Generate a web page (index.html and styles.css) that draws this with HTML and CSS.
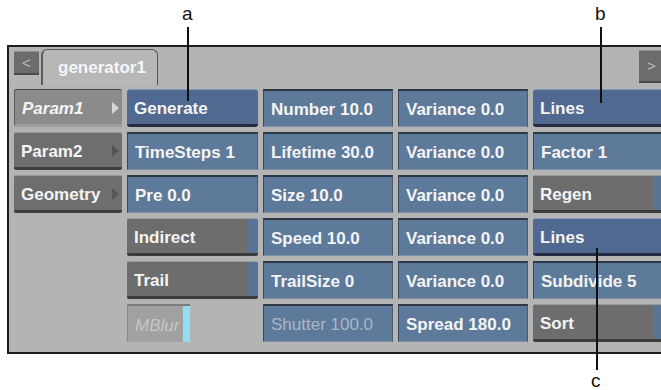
FILE: index.html
```html
<!DOCTYPE html>
<html lang="en">
<head>
  <meta charset="UTF-8">
  <title>generator1 - Parameters</title>
  <link rel="stylesheet" href="styles.css">
</head>
<body>

  <div class="figure">

    <div class="panel">
      <div class="tabbar">
        <div class="nav">&lt;</div>
        <div class="tab">generator1</div>
        <div class="nav nav-next">&gt;</div>
      </div>

      <div class="grid">
        <!-- row 1 -->
        <div class="cell menu active">Param1</div>
        <div class="cell sel">Generate</div>
        <div class="cell field">Number 10.0</div>
        <div class="cell field">Variance 0.0</div>
        <div class="cell sel">Lines</div>

        <!-- row 2 -->
        <div class="cell menu">Param2</div>
        <div class="cell field">TimeSteps 1</div>
        <div class="cell field">Lifetime 30.0</div>
        <div class="cell field">Variance 0.0</div>
        <div class="cell field">Factor 1</div>

        <!-- row 3 -->
        <div class="cell menu">Geometry</div>
        <div class="cell field">Pre 0.0</div>
        <div class="cell field">Size 10.0</div>
        <div class="cell field">Variance 0.0</div>
        <div class="cell btn toggle">Regen</div>

        <!-- row 4 -->
        <div class="empty"></div>
        <div class="cell btn toggle">Indirect</div>
        <div class="cell field">Speed 10.0</div>
        <div class="cell field">Variance 0.0</div>
        <div class="cell sel">Lines</div>

        <!-- row 5 -->
        <div class="empty"></div>
        <div class="cell btn toggle">Trail</div>
        <div class="cell field">TrailSize 0</div>
        <div class="cell field">Variance 0.0</div>
        <div class="cell field">Subdivide 5</div>

        <!-- row 6 -->
        <div class="empty"></div>
        <div class="cell mblur">MBlur</div>
        <div class="cell field off">Shutter 100.0</div>
        <div class="cell field">Spread 180.0</div>
        <div class="cell btn toggle">Sort</div>
      </div>
    </div>

    <!-- callouts -->
    <div class="callout callout-a"><span>a</span></div>
    <div class="callout callout-b"><span>b</span></div>
    <div class="callout callout-c"><span>c</span></div>

  </div>

</body>
</html>
```

FILE: styles.css
```css
body {
  margin: 0;
  background: #fff;
  font-family: 'Liberation Sans', Arial, sans-serif;
  overflow: hidden;
}

.figure {
  position: relative;
  width: 661px;
  height: 390px;
  overflow: hidden;
}

.panel {
  position: absolute;
  left: 7px;
  top: 45px;
  width: 659px;
  height: 309px;
  box-sizing: border-box;
  border: 2px solid #1e1e1e;
  background: #b4b4b4;
}

.tabbar {
  display: flex;
  align-items: flex-end;
  height: 38px;
  padding-left: 5px;
}

.nav {
  align-self: flex-start;
  margin-top: 4px;
  width: 25px;
  height: 24px;
  box-sizing: border-box;
  background: #6c6c6c;
  border-top: 1px solid #8e8e8e;
  border-bottom: 2px solid #4a4a4a;
  color: #bdbdbd;
  font-size: 15px;
  line-height: 21px;
  text-align: center;
}

.nav-next {
  margin-top: 3px;
  height: 33px;
  line-height: 30px;
  margin-left: auto;
}

.tab {
  margin-left: 2px;
  width: 117px;
  height: 36px;
  box-sizing: border-box;
  border: 1px solid #555;
  border-bottom: none;
  border-left: 2px solid #5a5a5a;
  border-radius: 6px 6px 0 0;
  background: #b7b7b7;
  color: #f6f6f6;
  font-size: 17px;
  font-weight: bold;
  line-height: 36px;
  padding-left: 15px;
}

.grid {
  display: grid;
  grid-template-columns: 108px 131px 130px 130px 131px;
  grid-auto-rows: 38px;
  column-gap: 5px;
  row-gap: 5px;
  padding: 4px 0 0 5px;
}

.cell {
  display: flex;
  align-items: center;
  padding: 3px 0 0 7px;
  box-sizing: border-box;
  color: #f4f4f4;
  font-size: 17px;
  font-weight: bold;
  white-space: nowrap;
  overflow: hidden;
}

/* inset value field */
.field {
  background: #5e7a9a;
  border-top: 2px solid #2f3845;
  border-left: 1px solid #3b4758;
  border-right: 1px solid #4a5a70;
  border-bottom: 1px solid #8091a6;
}

.field.off {
  color: #a9b6c6;
  font-weight: normal;
}

/* selected blue button */
.sel {
  background: #4f6990;
  border-top: 1px solid #8598b6;
  border-bottom: 3px solid #252b43;
  border-radius: 3px;
}

/* grey raised button */
.btn {
  background: #6d6d6d;
  border-top: 1px solid #999;
  border-bottom: 3px solid #3c3c3c;
  border-radius: 2px;
}

.toggle {
  background: linear-gradient(to right, #6d6d6d calc(100% - 11px), #5a7495 calc(100% - 11px));
}

/* param menus */
.menu {
  position: relative;
  background: #6e6e6e;
  border-top: 1px solid #979797;
  border-bottom: 3px solid #3f3f3f;
  border-radius: 2px;
}

.menu::after {
  content: '';
  position: absolute;
  right: 3px;
  top: 12px;
  border-left: 7px solid #555;
  border-top: 6px solid transparent;
  border-bottom: 6px solid transparent;
}

.menu.active {
  background: #8b8b8b;
  border-top: 1px solid #4a4a4a;
  border-left: 1px solid #5a5a5a;
  border-bottom: 3px solid #9c9c9c;
  font-style: italic;
}

.menu.active::after {
  border-left-color: #d6d6d6;
}

.mblur {
  width: 63px;
  background: linear-gradient(to right, #a1a1a1 55px, #93def7 55px);
  border-top: 2px solid #7b7b7b;
  border-left: 1px solid #8a8a8a;
  color: #c6c6c6;
  font-style: italic;
  font-weight: normal;
}

/* callout labels */
.callout {
  position: absolute;
  width: 0;
  border-left: 2px solid #111;
}

.callout span {
  position: absolute;
  left: -7px;
  font-size: 19px;
  color: #111;
}

.callout-a {
  left: 187px;
  top: 27px;
  height: 74px;
}

.callout-b {
  left: 600px;
  top: 27px;
  height: 76px;
}

.callout-a span,
.callout-b span {
  top: -24px;
}

.callout-c {
  left: 596px;
  top: 248px;
  height: 122px;
}

.callout-c span {
  top: 123px;
  line-height: 1;
}
```
